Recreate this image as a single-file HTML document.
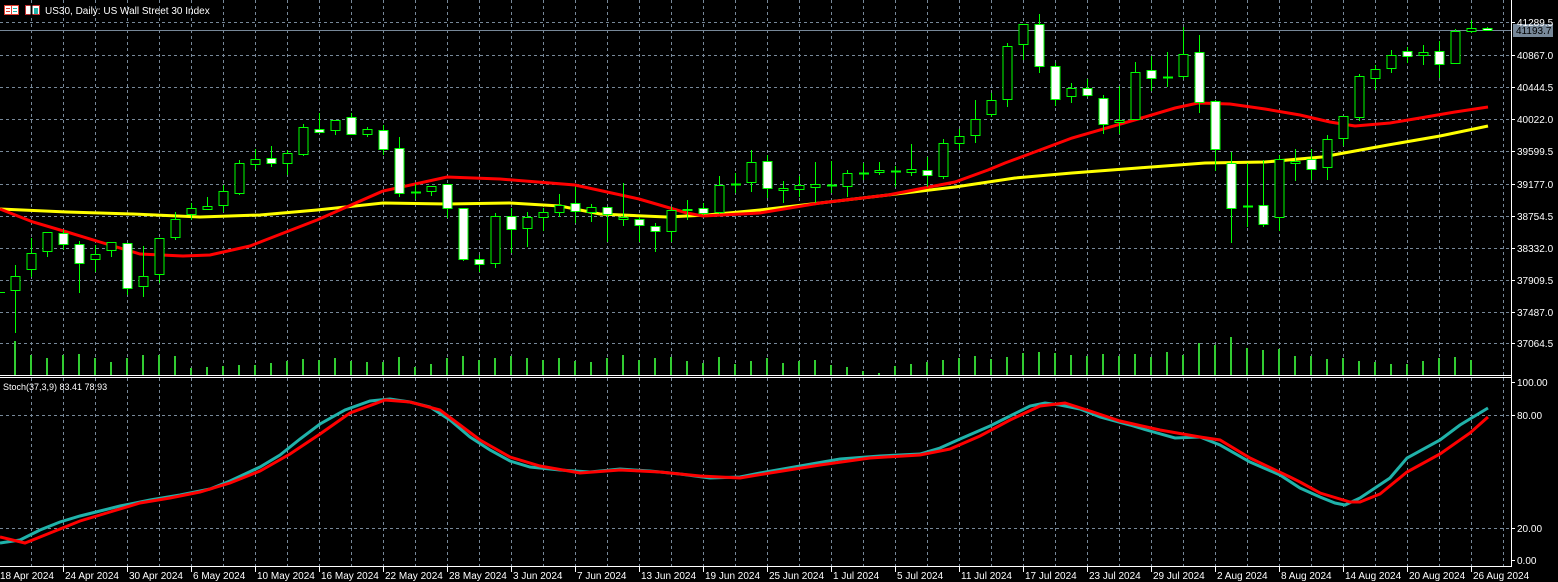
<!DOCTYPE html>
<html><head><meta charset="utf-8"><style>
html,body{margin:0;padding:0;background:#000;width:1558px;height:582px;overflow:hidden}
svg{display:block}
text{font-family:"Liberation Sans",sans-serif;font-size:10px;fill:#fff}
</style></head><body>
<svg width="1558" height="582" viewBox="0 0 1558 582" xmlns="http://www.w3.org/2000/svg" shape-rendering="crispEdges">
<rect width="1558" height="582" fill="#000"/>
<g stroke="#778899" stroke-width="1" stroke-dasharray="3,3">
<path d="M31.5 0V567M63.5 0V567M95.5 0V567M127.5 0V567M159.5 0V567M191.5 0V567M223.5 0V567M255.5 0V567M287.5 0V567M319.5 0V567M351.5 0V567M383.5 0V567M415.5 0V567M447.5 0V567M479.5 0V567M511.5 0V567M543.5 0V567M575.5 0V567M607.5 0V567M639.5 0V567M671.5 0V567M703.5 0V567M735.5 0V567M767.5 0V567M799.5 0V567M831.5 0V567M863.5 0V567M895.5 0V567M927.5 0V567M959.5 0V567M991.5 0V567M1023.5 0V567M1055.5 0V567M1087.5 0V567M1119.5 0V567M1151.5 0V567M1183.5 0V567M1215.5 0V567M1247.5 0V567M1279.5 0V567M1311.5 0V567M1343.5 0V567M1375.5 0V567M1407.5 0V567M1439.5 0V567M1471.5 0V567M1503.5 0V567"/>
<path d="M0 22.5H1511M0 55.5H1511M0 87.5H1511M0 119.5H1511M0 151.5H1511M0 184.5H1511M0 216.5H1511M0 248.5H1511M0 280.5H1511M0 312.5H1511M0 343.5H1511M0 415.5H1511M0 528.5H1511"/>
</g>
<line x1="0" y1="30.5" x2="1511" y2="30.5" stroke="#778899"/>
<!-- volumes -->
<g stroke="#32cd32" stroke-width="2">
<path d="M15 341V375M31 355V375M47 358V375M63 355V375M79 354V375M95 358V375M111 362V375M127 358V375M143 355V375M159 355V375M175 356V375M191 368V375M207 367V375M223 366V375M239 365V375M255 365V375M271 363V375M287 361V375M303 359V375M319 360V375M335 358V375M351 361V375M367 362V375M383 362V375M399 357V375M415 367V375M431 364V375M447 358V375M463 356V375M479 360V375M495 358V375M511 356V375M527 358V375M543 360V375M559 358V375M575 361V375M591 362V375M607 358V375M623 355V375M639 360V375M655 358V375M671 357V375M687 361V375M703 363V375M719 357V375M735 364V375M751 361V375M767 358V375M783 363V375M799 361V375M815 360V375M831 365V375M847 367V375M863 371V375M879 373V375M895 366V375M911 364V375M927 362V375M943 360V375M959 358V375M975 356V375M991 359V375M1007 357V375M1023 353V375M1039 352V375M1055 353V375M1071 355V375M1087 356V375M1103 354V375M1119 356V375M1135 354V375M1151 357V375M1167 352V375M1183 355V375M1199 343V375M1215 345V375M1231 337V375M1247 348V375M1263 350V375M1279 349V375M1295 356V375M1311 356V375M1327 359V375M1343 358V375M1359 361V375M1375 362V375M1391 364V375M1407 364V375M1423 361V375M1439 358V375M1455 357V375M1471 360V375"/>
</g>
<!-- MAs -->
<polyline fill="none" stroke="#ffff00" stroke-width="3" shape-rendering="auto" points="0,209 67,212 133,214 200,217 260,215 317,210 383,203 447,204 510,203 560,206 600,214 667,217 707,215 760,210 820,203 888,195 955,187 1015,178 1072,173 1138,168 1205,163 1265,162 1322,157 1388,145 1440,136 1488,126"/>
<polyline fill="none" stroke="#ff0000" stroke-width="3" shape-rendering="auto" points="0,209 33,222 67,232 100,242 140,254 183,256 210,255 250,246 317,220 383,191 447,177 500,179 575,185 639,199 687,213 703,216 760,213 820,203 888,195 955,182 988,170 1005,163 1040,150 1072,138 1138,119 1175,108 1198,103 1230,104 1265,109 1300,115 1330,122 1355,126 1390,123 1420,118 1455,112 1488,107"/>
<!-- candles -->
<g stroke="#00ff00" stroke-width="1">
<path d="M0 292.5H5"/>
<path d="M15.5 265V333M31.5 238V277M47.5 232V257M63.5 230V250M79.5 241V293M95.5 245V272M111.5 242V257M127.5 243V295M143.5 246V297M159.5 238V283M175.5 212V240M191.5 203V220M207.5 197V209M223.5 185V212M239.5 160V195M255.5 149V169M271.5 146V167M287.5 150V175M303.5 124V156M319.5 113V133M335.5 120V135M351.5 113V135M367.5 127V137M383.5 125V155M399.5 137V197M415.5 184V199M431.5 186V196M447.5 184V218M463.5 208V261M479.5 255V272M495.5 213V268M511.5 208V253M527.5 212V247M543.5 208V231M559.5 194V217M575.5 187V223M591.5 204V222M607.5 207V242M623.5 183V226M639.5 217V242M655.5 223V252M671.5 207V242M687.5 200V220M703.5 203V215M719.5 176V214M735.5 173V193M751.5 150V192M767.5 155V198M783.5 181V203M799.5 176V197M815.5 162V203M831.5 161V193M847.5 170V197M863.5 163V180M879.5 162V175M895.5 166V187M911.5 144V176M927.5 157V187M943.5 139V179M959.5 129V150M975.5 100V143M991.5 93V117M1007.5 43V107M1023.5 24V60M1039.5 14V73M1055.5 63V106M1071.5 83V103M1087.5 79V97M1103.5 95V134M1119.5 86V134M1135.5 62V120M1151.5 56V91M1167.5 52V87M1183.5 27V79M1199.5 35V113M1215.5 100V171M1231.5 152V243M1247.5 163V227M1263.5 160V227M1279.5 155V231M1295.5 149V181M1311.5 149V180M1327.5 135V180M1343.5 116V146M1359.5 74V121M1375.5 65V90M1391.5 50V73M1407.5 47V63M1423.5 45V65M1439.5 41V78M1455.5 29V63M1471.5 20V33M1487.5 27V31"/>
<path d="M411 192.5H421M731 184.5H741M827 185.5H837M859 173.5H869M891 171.5H901M1163 77.5H1173M1243 206.5H1253" stroke-width="2"/>
<g fill="#000">
<rect x="11" y="276.5" width="9" height="14"/><rect x="27" y="253.5" width="9" height="16"/><rect x="43" y="232.5" width="9" height="19"/><rect x="91" y="254.5" width="9" height="5"/><rect x="107" y="242.5" width="9" height="8"/><rect x="139" y="276.5" width="9" height="10"/><rect x="155" y="238.5" width="9" height="36"/><rect x="171" y="219.5" width="9" height="18"/><rect x="187" y="208.5" width="9" height="6"/><rect x="203" y="206.5" width="9" height="3"/><rect x="219" y="191.5" width="9" height="14"/><rect x="235" y="163.5" width="9" height="30"/><rect x="251" y="159.5" width="9" height="5"/><rect x="283" y="153.5" width="9" height="10"/><rect x="299" y="127.5" width="9" height="27"/><rect x="331" y="120.5" width="9" height="10"/><rect x="363" y="129.5" width="9" height="5"/><rect x="427" y="186.5" width="9" height="5"/><rect x="491" y="216.5" width="9" height="47"/><rect x="523" y="217.5" width="9" height="11"/><rect x="539" y="212.5" width="9" height="5"/><rect x="555" y="205.5" width="9" height="7"/><rect x="587" y="207.5" width="9" height="5"/><rect x="619" y="217.5" width="9" height="2"/><rect x="667" y="210.5" width="9" height="21"/><rect x="683" y="209.5" width="9" height="1"/><rect x="715" y="185.5" width="9" height="27"/><rect x="747" y="162.5" width="9" height="20"/><rect x="779" y="188.5" width="9" height="2"/><rect x="795" y="185.5" width="9" height="4"/><rect x="811" y="184.5" width="9" height="3"/><rect x="843" y="173.5" width="9" height="13"/><rect x="875" y="170.5" width="9" height="2"/><rect x="907" y="169.5" width="9" height="3"/><rect x="939" y="143.5" width="9" height="33"/><rect x="955" y="136.5" width="9" height="7"/><rect x="971" y="119.5" width="9" height="16"/><rect x="987" y="100.5" width="9" height="14"/><rect x="1003" y="46.5" width="9" height="53"/><rect x="1019" y="24.5" width="9" height="20"/><rect x="1067" y="88.5" width="9" height="8"/><rect x="1115" y="120.5" width="9" height="2"/><rect x="1131" y="72.5" width="9" height="47"/><rect x="1179" y="54.5" width="9" height="22"/><rect x="1275" y="159.5" width="9" height="58"/><rect x="1291" y="161.5" width="9" height="2"/><rect x="1323" y="139.5" width="9" height="28"/><rect x="1339" y="116.5" width="9" height="22"/><rect x="1355" y="76.5" width="9" height="41"/><rect x="1371" y="69.5" width="9" height="9"/><rect x="1387" y="55.5" width="9" height="13"/><rect x="1419" y="52.5" width="9" height="3"/><rect x="1451" y="31.5" width="9" height="32"/><rect x="1467" y="28.5" width="9" height="3"/>
</g>
<g fill="#fff">
<rect x="59" y="233.5" width="9" height="11"/><rect x="75" y="244.5" width="9" height="19"/><rect x="123" y="243.5" width="9" height="45"/><rect x="267" y="158.5" width="9" height="5"/><rect x="315" y="129.5" width="9" height="3"/><rect x="347" y="117.5" width="9" height="17"/><rect x="379" y="130.5" width="9" height="19"/><rect x="395" y="148.5" width="9" height="45"/><rect x="443" y="184.5" width="9" height="24"/><rect x="459" y="208.5" width="9" height="51"/><rect x="475" y="259.5" width="9" height="5"/><rect x="507" y="216.5" width="9" height="13"/><rect x="571" y="203.5" width="9" height="8"/><rect x="603" y="207.5" width="9" height="7"/><rect x="635" y="219.5" width="9" height="6"/><rect x="651" y="226.5" width="9" height="5"/><rect x="699" y="208.5" width="9" height="5"/><rect x="763" y="161.5" width="9" height="27"/><rect x="923" y="170.5" width="9" height="5"/><rect x="1035" y="24.5" width="9" height="42"/><rect x="1051" y="66.5" width="9" height="33"/><rect x="1083" y="88.5" width="9" height="7"/><rect x="1099" y="98.5" width="9" height="26"/><rect x="1147" y="70.5" width="9" height="8"/><rect x="1195" y="52.5" width="9" height="50"/><rect x="1211" y="101.5" width="9" height="48"/><rect x="1227" y="163.5" width="9" height="45"/><rect x="1259" y="205.5" width="9" height="19"/><rect x="1307" y="159.5" width="9" height="10"/><rect x="1403" y="51.5" width="9" height="5"/><rect x="1435" y="51.5" width="9" height="13"/><rect x="1483" y="28.5" width="9" height="2"/>
</g>
</g>
<!-- stochastic -->
<polyline fill="none" stroke="#20b2aa" stroke-width="3" shape-rendering="auto" points="0,543 20,540 40,530 60,522 80,516 100,511 120,506 150,500 180,495 210,489 230,481 260,467 280,455 300,439 320,424 345,410 370,401 390,399 410,402 430,407 450,420 470,437 490,450 510,461 530,467 560,470 590,472 620,469 650,471 680,474 710,478 740,477 760,473 800,466 840,459 880,456 920,454 940,448 960,439 990,426 1010,416 1030,406 1045,403 1060,405 1080,409 1100,417 1130,425 1150,431 1175,438 1200,437 1220,445 1250,462 1280,475 1300,488 1320,497 1335,503 1345,505 1360,498 1390,478 1407,458 1440,440 1460,425 1488,408"/>
<polyline fill="none" stroke="#ff0000" stroke-width="3" shape-rendering="auto" points="0,537 25,543 50,533 80,521 110,512 140,503 170,498 200,492 230,483 260,471 290,454 320,434 350,413 385,400 410,402 440,410 460,425 480,440 510,457 540,466 580,473 620,470 660,472 700,476 740,478 770,473 820,465 870,458 920,455 950,449 980,436 1010,420 1040,406 1065,403 1090,411 1120,421 1160,430 1200,437 1220,440 1250,458 1290,477 1300,482 1320,493 1350,502 1360,502 1380,494 1407,472 1440,454 1470,433 1488,417"/>
<!-- frames -->
<g stroke="#fff" stroke-width="1">
<path d="M0 375.5H1512M0 377.5H1512M1511.5 0V567M0 566.5H1512"/>
<path d="M1511 22.5H1515M1511 55.5H1515M1511 87.5H1515M1511 119.5H1515M1511 151.5H1515M1511 184.5H1515M1511 216.5H1515M1511 248.5H1515M1511 280.5H1515M1511 312.5H1515M1511 343.5H1515M1511 382.5H1515M1511 415.5H1515M1511 528.5H1515M1511 560.5H1515"/>
<path d="M63.5 567V572M127.5 567V572M191.5 567V572M255.5 567V572M319.5 567V572M383.5 567V572M447.5 567V572M511.5 567V572M575.5 567V572M639.5 567V572M703.5 567V572M767.5 567V572M831.5 567V572M895.5 567V572M959.5 567V572M1023.5 567V572M1087.5 567V572M1151.5 567V572M1215.5 567V572M1279.5 567V572M1343.5 567V572M1407.5 567V572M1471.5 567V572"/>
</g>
<rect x="1513" y="24" width="40" height="13" fill="#778899"/>
<text x="1516" y="34" style="fill:#000">41193.7</text>
<g>
<text x="1517" y="26">41289.5</text><text x="1517" y="59">40867.0</text><text x="1517" y="91">40444.5</text><text x="1517" y="123">40022.0</text><text x="1517" y="155">39599.5</text><text x="1517" y="188">39177.0</text><text x="1517" y="220">38754.5</text><text x="1517" y="252">38332.0</text><text x="1517" y="284">37909.5</text><text x="1517" y="316">37487.0</text><text x="1517" y="347">37064.5</text>
<text x="1517" y="386">100.00</text><text x="1517" y="419">80.00</text><text x="1517" y="532">20.00</text><text x="1517" y="564">0.00</text>
</g>
<g>
<text x="0" y="579">18 Apr 2024</text><text x="65" y="579">24 Apr 2024</text><text x="129" y="579">30 Apr 2024</text><text x="193" y="579">6 May 2024</text><text x="257" y="579">10 May 2024</text><text x="321" y="579">16 May 2024</text><text x="385" y="579">22 May 2024</text><text x="449" y="579">28 May 2024</text><text x="513" y="579">3 Jun 2024</text><text x="577" y="579">7 Jun 2024</text><text x="641" y="579">13 Jun 2024</text><text x="705" y="579">19 Jun 2024</text><text x="769" y="579">25 Jun 2024</text><text x="833" y="579">1 Jul 2024</text><text x="897" y="579">5 Jul 2024</text><text x="961" y="579">11 Jul 2024</text><text x="1025" y="579">17 Jul 2024</text><text x="1089" y="579">23 Jul 2024</text><text x="1153" y="579">29 Jul 2024</text><text x="1217" y="579">2 Aug 2024</text><text x="1281" y="579">8 Aug 2024</text><text x="1345" y="579">14 Aug 2024</text><text x="1409" y="579">20 Aug 2024</text><text x="1473" y="579">26 Aug 2024</text>
</g>
<text x="3" y="390" style="font-size:9px">Stoch(37,3,9) 83.41 78.93</text>
<!-- header icons -->
<rect x="4.5" y="5.5" width="14" height="9" fill="#fff" stroke="#e04030"/>
<path d="M11.5 5V15M6 8.5H10M6 11.5H10M13 8.5H17M13 11.5H17" stroke="#e04030"/>
<path d="M13 8.5H17M13 11.5H17" stroke="#20b2aa"/>
<rect x="25.5" y="5.5" width="14" height="9" fill="#fff" stroke="#c03030"/>
<path d="M31.5 5V15" stroke="#000" stroke-width="2"/>
<rect x="34" y="8" width="4" height="6" fill="#20b2aa"/>
<text x="45" y="14">US30, Daily:  US Wall Street 30 Index</text>
</svg>
</body></html>
